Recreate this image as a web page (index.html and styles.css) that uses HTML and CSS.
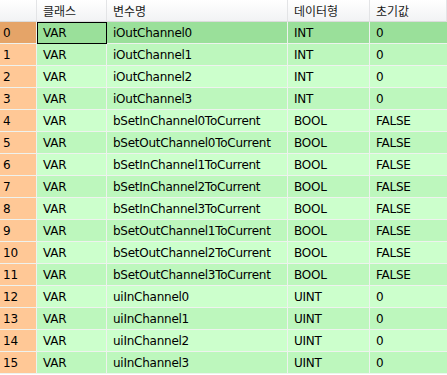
FILE: index.html
```html
<!DOCTYPE html>
<html>
<head>
<meta charset="utf-8">
<link rel="stylesheet" href="styles.css">
</head>
<body>
<div class="grid">
  <div class="row head">
    <div class="c idx"></div>
    <div class="c">클래스</div>
    <div class="c">변수명</div>
    <div class="c">데이터형</div>
    <div class="c">초기값</div>
  </div>
  <div class="row sel"><div class="c idx">0</div><div class="c cls focus">VAR</div><div class="c">iOutChannel0</div><div class="c">INT</div><div class="c">0</div></div>
  <div class="row odd"><div class="c idx">1</div><div class="c cls">VAR</div><div class="c">iOutChannel1</div><div class="c">INT</div><div class="c">0</div></div>
  <div class="row"><div class="c idx">2</div><div class="c cls">VAR</div><div class="c">iOutChannel2</div><div class="c">INT</div><div class="c">0</div></div>
  <div class="row odd"><div class="c idx">3</div><div class="c cls">VAR</div><div class="c">iOutChannel3</div><div class="c">INT</div><div class="c">0</div></div>
  <div class="row"><div class="c idx">4</div><div class="c cls">VAR</div><div class="c">bSetInChannel0ToCurrent</div><div class="c">BOOL</div><div class="c">FALSE</div></div>
  <div class="row odd"><div class="c idx">5</div><div class="c cls">VAR</div><div class="c">bSetOutChannel0ToCurrent</div><div class="c">BOOL</div><div class="c">FALSE</div></div>
  <div class="row"><div class="c idx">6</div><div class="c cls">VAR</div><div class="c">bSetInChannel1ToCurrent</div><div class="c">BOOL</div><div class="c">FALSE</div></div>
  <div class="row odd"><div class="c idx">7</div><div class="c cls">VAR</div><div class="c">bSetInChannel2ToCurrent</div><div class="c">BOOL</div><div class="c">FALSE</div></div>
  <div class="row"><div class="c idx">8</div><div class="c cls">VAR</div><div class="c">bSetInChannel3ToCurrent</div><div class="c">BOOL</div><div class="c">FALSE</div></div>
  <div class="row odd"><div class="c idx">9</div><div class="c cls">VAR</div><div class="c">bSetOutChannel1ToCurrent</div><div class="c">BOOL</div><div class="c">FALSE</div></div>
  <div class="row"><div class="c idx">10</div><div class="c cls">VAR</div><div class="c">bSetOutChannel2ToCurrent</div><div class="c">BOOL</div><div class="c">FALSE</div></div>
  <div class="row odd"><div class="c idx">11</div><div class="c cls">VAR</div><div class="c">bSetOutChannel3ToCurrent</div><div class="c">BOOL</div><div class="c">FALSE</div></div>
  <div class="row"><div class="c idx">12</div><div class="c cls">VAR</div><div class="c">uiInChannel0</div><div class="c">UINT</div><div class="c">0</div></div>
  <div class="row odd"><div class="c idx">13</div><div class="c cls">VAR</div><div class="c">uiInChannel1</div><div class="c">UINT</div><div class="c">0</div></div>
  <div class="row"><div class="c idx">14</div><div class="c cls">VAR</div><div class="c">uiInChannel2</div><div class="c">UINT</div><div class="c">0</div></div>
  <div class="row odd"><div class="c idx">15</div><div class="c cls">VAR</div><div class="c">uiInChannel3</div><div class="c">UINT</div><div class="c">0</div></div>
</div>
</body>
</html>
```
FILE: styles.css
```css
html, body {
  margin: 0;
  padding: 0;
  background: #ffffff;
}
.grid {
  display: flex;
  flex-direction: column;
  font-family: "DejaVu Sans", Tahoma, sans-serif;
  font-size: 12px;
  letter-spacing: -0.25px;
  color: #000;
}
.row {
  display: grid;
  grid-template-columns: 37px 70px 181px 82px 77px;
  height: 22px;
  background: #ccffcc;
}
.row.odd {
  background: #bdf7bd;
}
.row.sel {
  background: #9ae09a;
}
.c {
  box-sizing: border-box;
  border-right: 1px solid #eef2ee;
  border-bottom: 1px solid #eef2ee;
  padding-left: 6px;
  padding-top: 2px;
  line-height: 19px;
  white-space: nowrap;
  overflow: hidden;
}
.c:last-child {
  border-right: none;
}
.c.idx {
  background: #ffc896;
  padding-left: 3px;
}
.row.sel .c.idx {
  background: #e5a468;
}
.c.focus {
  outline: 1px solid #000;
  outline-offset: -1px;
}
.row.head {
  background: linear-gradient(#ffffff, #f1f2f4);
  font-family: "Noto Sans CJK KR", sans-serif;
  font-size: 12px;
  letter-spacing: 0;
  color: #1a1a1a;
}
.row.head .c {
  border-right: 1px solid #e3e4e6;
  border-bottom: 1px solid #dcdcdc;
  padding-top: 0;
  line-height: 21px;
}
.row.head .c.idx {
  background: transparent;
}
```
